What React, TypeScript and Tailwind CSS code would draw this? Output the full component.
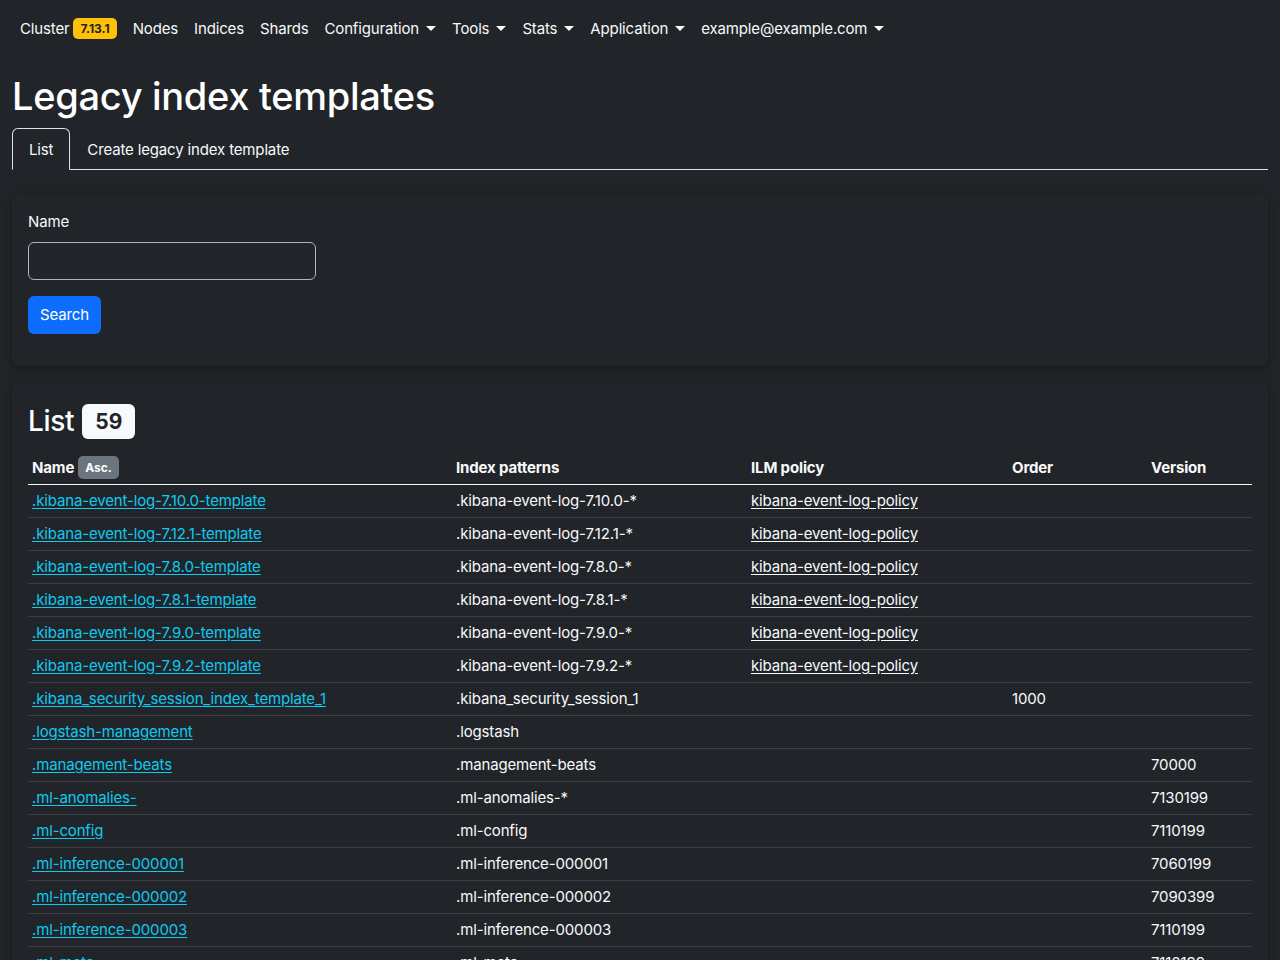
import React from 'react';

type Row = {
  name: string;
  patterns: string;
  policy?: string;
  order?: string;
  version?: string;
};

const rows: Row[] = [
  { name: '.kibana-event-log-7.10.0-template', patterns: '.kibana-event-log-7.10.0-*', policy: 'kibana-event-log-policy' },
  { name: '.kibana-event-log-7.12.1-template', patterns: '.kibana-event-log-7.12.1-*', policy: 'kibana-event-log-policy' },
  { name: '.kibana-event-log-7.8.0-template', patterns: '.kibana-event-log-7.8.0-*', policy: 'kibana-event-log-policy' },
  { name: '.kibana-event-log-7.8.1-template', patterns: '.kibana-event-log-7.8.1-*', policy: 'kibana-event-log-policy' },
  { name: '.kibana-event-log-7.9.0-template', patterns: '.kibana-event-log-7.9.0-*', policy: 'kibana-event-log-policy' },
  { name: '.kibana-event-log-7.9.2-template', patterns: '.kibana-event-log-7.9.2-*', policy: 'kibana-event-log-policy' },
  { name: '.kibana_security_session_index_template_1', patterns: '.kibana_security_session_1', order: '1000' },
  { name: '.logstash-management', patterns: '.logstash' },
  { name: '.management-beats', patterns: '.management-beats', version: '70000' },
  { name: '.ml-anomalies-', patterns: '.ml-anomalies-*', version: '7130199' },
  { name: '.ml-config', patterns: '.ml-config', version: '7110199' },
  { name: '.ml-inference-000001', patterns: '.ml-inference-000001', version: '7060199' },
  { name: '.ml-inference-000002', patterns: '.ml-inference-000002', version: '7090399' },
  { name: '.ml-inference-000003', patterns: '.ml-inference-000003', version: '7110199' },
  { name: '.ml-meta', patterns: '.ml-meta', version: '7110199' },
  { name: '.ml-notifications-000001', patterns: '.ml-notifications-000001', version: '7110199' },
  { name: '.ml-state', patterns: '.ml-state*', version: '7110199' },
];

function Caret() {
  return (
    <span className="ml-[7px] inline-block h-0 w-0 border-x-[5px] border-t-[5px] border-x-transparent border-t-[#f8f9fa] align-[3px]" />
  );
}

function NavLink({ label, dropdown }: { label: string; dropdown?: boolean }) {
  return (
    <a className="px-2 py-2 text-[#f8f9fa] whitespace-nowrap">
      {label}
      {dropdown && <Caret />}
    </a>
  );
}

export default function App() {
  return (
    <div
      className="min-h-[960px] bg-[#212529] text-[15px] leading-6 tracking-[-0.15px] text-[#f8f9fa]"
      style={{ fontFamily: 'Inter, "Noto Sans", sans-serif' }}
    >
      <nav className="flex h-14 items-center px-3 pt-px">
        <a className="flex items-center px-2 py-2 text-[#f8f9fa]">
          Cluster
          <span className="ml-1 rounded-[5px] bg-[#ffc107] px-[7px] py-[4px] text-[12px] font-bold leading-[13px] tracking-normal text-[#212529]">
            7.13.1
          </span>
        </a>
        <NavLink label="Nodes" />
        <NavLink label="Indices" />
        <NavLink label="Shards" />
        <NavLink label="Configuration" dropdown />
        <NavLink label="Tools" dropdown />
        <NavLink label="Stats" dropdown />
        <NavLink label="Application" dropdown />
        <NavLink label="example@example.com" dropdown />
      </nav>

      <main className="px-3">
        <h1 className="mt-4 mb-2 text-[38px] font-medium leading-[48px] tracking-[-0.3px] text-white">
          Legacy index templates
        </h1>

        <ul className="flex border-b border-[#dee2e6]">
          <li className="-mb-px">
            <a className="block rounded-t-[6px] border border-b-[#212529] border-[#dee2e6] bg-[#212529] px-4 pt-[9px] pb-[7px] text-[#f8f9fa]">
              List
            </a>
          </li>
          <li className="-mb-px">
            <a className="block border border-transparent px-4 pt-[9px] pb-[7px] text-[#f8f9fa]">
              Create legacy index template
            </a>
          </li>
        </ul>

        <section className="mt-6 rounded-[6px] bg-[#212529] p-4 shadow-[0_2px_8px_rgba(0,0,0,0.35)]">
          <label className="mb-2 block">Name</label>
          <input
            type="text"
            className="block h-[38px] w-[288px] rounded-[6px] border border-[#adb5bd] bg-[#212529] px-3 text-[#f8f9fa] outline-none"
          />
          <button className="mt-4 mb-4 h-[38px] rounded-[6px] bg-[#0d6efd] px-3 text-white">
            Search
          </button>
        </section>

        <section className="mt-4 rounded-[6px] bg-[#212529] p-4 shadow-[0_2px_8px_rgba(0,0,0,0.35)]">
          <div className="mb-2 flex h-[46px] items-center">
            <h2 className="text-[28px] font-medium leading-[34px] tracking-[-0.3px] text-white">List</h2>
            <span className="ml-2 flex h-[35px] items-center rounded-[6px] bg-[#f8f9fa] px-[13px] pt-[1px] text-[21px] font-bold tracking-normal text-[#212529]">
              59
            </span>
          </div>

          <table className="w-full table-fixed border-collapse">
            <colgroup>
              <col className="w-[424px]" />
              <col className="w-[295px]" />
              <col className="w-[261px]" />
              <col className="w-[139px]" />
              <col />
            </colgroup>
            <thead>
              <tr className="border-b border-[#f8f9fa] text-left">
                <th className="px-1 py-1 font-bold">
                  Name
                  <span className="ml-1 rounded-[5px] bg-[#6c757d] px-[7px] py-[4px] align-[1px] text-[12px] font-bold leading-[12px] tracking-normal text-white">
                    Asc.
                  </span>
                </th>
                <th className="px-1 py-1 font-bold">Index patterns</th>
                <th className="px-1 py-1 font-bold">ILM policy</th>
                <th className="px-1 py-1 font-bold">Order</th>
                <th className="px-1 py-1 font-bold">Version</th>
              </tr>
            </thead>
            <tbody>
              {rows.map((row) => (
                <tr key={row.name} className="border-b border-[#3a3e42]">
                  <td className="truncate px-1 py-1">
                    <a className="text-[#0dcaf0] underline underline-offset-2">{row.name}</a>
                  </td>
                  <td className="truncate px-1 py-1">{row.patterns}</td>
                  <td className="truncate px-1 py-1">
                    {row.policy && <a className="underline underline-offset-2">{row.policy}</a>}
                  </td>
                  <td className="px-1 py-1">{row.order}</td>
                  <td className="px-1 py-1">{row.version}</td>
                </tr>
              ))}
            </tbody>
          </table>
        </section>
      </main>
    </div>
  );
}
